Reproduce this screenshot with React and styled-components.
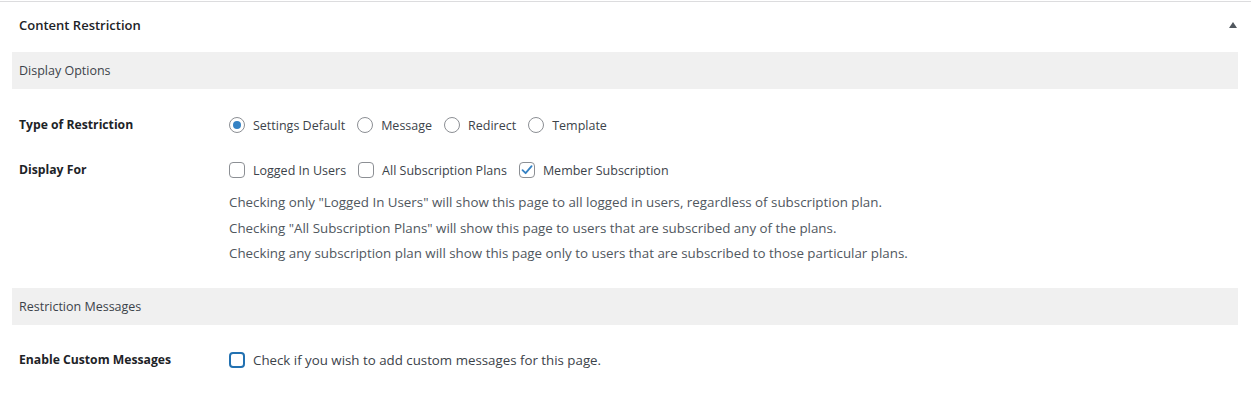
import styled, { createGlobalStyle } from "styled-components";

const Global = createGlobalStyle`
  html, body {
    margin: 0;
    background: #ffffff;
    font-family: "Open Sans", "Noto Sans", sans-serif;
    color: #3c434a;
  }
`;

const Panel = styled.div`
  width: 1251px;
  height: 420px;
  border-top: 1px solid #dcdcde;
  margin-top: 1px;
  box-sizing: border-box;
`;

const PanelHeader = styled.div`
  display: flex;
  align-items: center;
  justify-content: space-between;
  height: 45px;
  padding: 0 12px 0 19px;
  margin-bottom: 5px;
  font-size: 13px;
  font-weight: 600;
  color: #1d2327;
`;

const Toggle = styled.span`
  width: 0;
  height: 0;
  border-left: 4px solid transparent;
  border-right: 4px solid transparent;
  border-bottom: 6px solid #50575e;
  margin-right: 2px;
`;

const Body = styled.div`
  padding: 0 13px 0 12px;
`;

const SectionBar = styled.div`
  display: flex;
  align-items: center;
  height: 37px;
  padding: 0 7px;
  background: #f0f0f0;
  font-size: 12.5px;
  color: #3c434a;
`;

const Rows = styled.div`
  padding: ${(p) => p.$pad || "25px 0 21px"};
`;

const Row = styled.div`
  display: grid;
  grid-template-columns: 210px 1fr;
  padding: 0 7px;
  align-items: start;
  min-height: 45px;
`;

const Label = styled.div`
  font-size: 12.2px;
  font-weight: 700;
  color: #1d2327;
  line-height: 22px;
`;

const Options = styled.div`
  display: flex;
  align-items: center;
  height: 22px;
  gap: 12px;
  font-size: ${(p) => p.$size || 12.5}px;
`;

const Option = styled.label`
  display: flex;
  align-items: center;
  gap: 8px;
  color: #3c434a;
`;

const Radio = styled.span`
  width: 16px;
  height: 16px;
  box-sizing: border-box;
  border-radius: 50%;
  border: 1px solid #8c8f94;
  display: flex;
  align-items: center;
  justify-content: center;
  &::after {
    content: "";
    display: ${(p) => (p.$on ? "block" : "none")};
    width: 8px;
    height: 8px;
    border-radius: 50%;
    background: #3582c4;
  }
`;

const Box = styled.span`
  width: 16px;
  height: 16px;
  box-sizing: border-box;
  border-radius: 4px;
  border: ${(p) => (p.$focus ? "2px solid #2271b1" : "1px solid #8c8f94")};
  display: flex;
  align-items: center;
  justify-content: center;
`;

const Descs = styled.div`
  margin-top: 9px;
`;

const Desc = styled.p`
  margin: 0;
  font-size: 13.35px;
  line-height: 25.5px;
  color: #50575e;
`;

const Check = () => (
  <svg width="14" height="14" viewBox="0 0 14 14">
    <path d="M2.5 7.2 L5.6 10.2 L11.6 3.2" fill="none" stroke="#3582c4" strokeWidth="1.8" strokeLinecap="round" strokeLinejoin="round" />
  </svg>
);

export default function App() {
  return (
    <>
      <Global />
      <Panel>
        <PanelHeader>
          Content Restriction
          <Toggle />
        </PanelHeader>
        <Body>
          <SectionBar>Display Options</SectionBar>
          <Rows>
            <Row>
              <Label>Type of Restriction</Label>
              <Options>
                <Option><Radio $on />Settings Default</Option>
                <Option><Radio />Message</Option>
                <Option><Radio />Redirect</Option>
                <Option><Radio />Template</Option>
              </Options>
            </Row>
            <Row>
              <Label>Display For</Label>
              <div>
                <Options>
                  <Option><Box />Logged In Users</Option>
                  <Option><Box />All Subscription Plans</Option>
                  <Option><Box><Check /></Box>Member Subscription</Option>
                </Options>
                <Descs>
                  <Desc>Checking only "Logged In Users" will show this page to all logged in users, regardless of subscription plan.</Desc>
                  <Desc>Checking "All Subscription Plans" will show this page to users that are subscribed any of the plans.</Desc>
                  <Desc>Checking any subscription plan will show this page only to users that are subscribed to those particular plans.</Desc>
                </Descs>
              </div>
            </Row>
          </Rows>
          <SectionBar>Restriction Messages</SectionBar>
          <Rows $pad="24px 0">
            <Row>
              <Label>Enable Custom Messages</Label>
              <Options $size={13.3}>
                <Option><Box $focus />Check if you wish to add custom messages for this page.</Option>
              </Options>
            </Row>
          </Rows>
        </Body>
      </Panel>
    </>
  );
}
